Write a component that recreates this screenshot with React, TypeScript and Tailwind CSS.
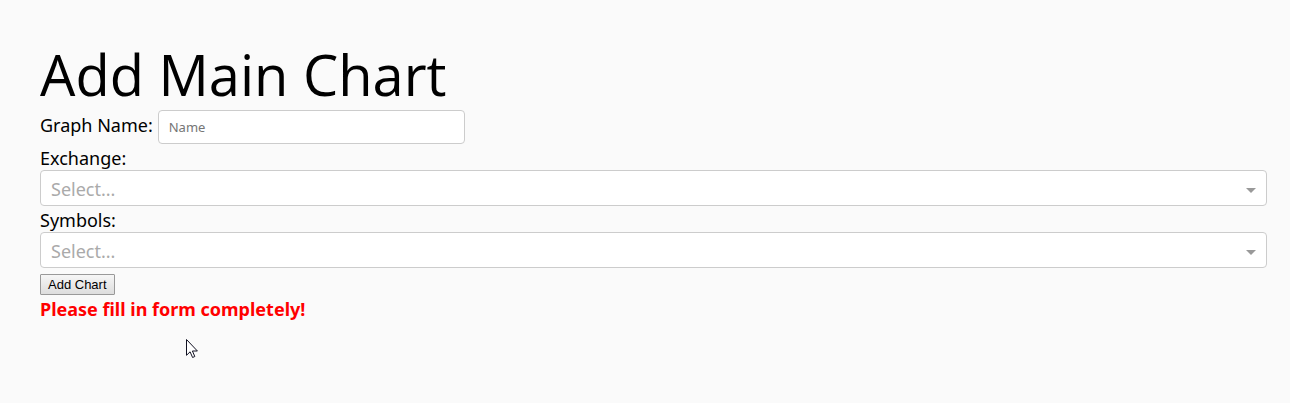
import React from "react";

function SelectField({ id, label }: { id: string; label: string }) {
  return (
    <div className="pt-0.5">
      <label htmlFor={id} className="block h-6 leading-6">{label}</label>
      <div className="relative">
        <select id={id} defaultValue="" className="block h-9 w-full appearance-none rounded border border-[#ccc] bg-white px-2.5 pt-0.5 text-[#aaa] outline-none">
          <option value="">Select...</option>
        </select>
        <svg aria-hidden="true" viewBox="0 0 10 5" className="pointer-events-none absolute top-[18px] right-[11px] h-[5px] w-2.5 fill-[#999]">
          <path d="M0 0h10L5 5z" />
        </svg>
      </div>
    </div>
  );
}

export default function App() {
  return (
    <main className="relative min-h-screen bg-[#fafafa] pt-9 pr-[23px] pb-10 pl-10 font-['Noto_Sans',sans-serif] text-lg text-black">
      <h1 className="h-[74px] font-['Open_Sans','Noto_Sans',sans-serif] text-[56px] leading-[76px] font-normal">Add Main Chart</h1>
      <form onSubmit={(e) => e.preventDefault()}>
        <div className="flex items-start gap-[5px]">
          <label htmlFor="graph-name" className="leading-[30px]">Graph Name:</label>
          <input id="graph-name" placeholder="Name" className="h-[34px] w-[307px] rounded border border-[#ccc] bg-white px-2.5 text-[13px] outline-none placeholder:text-[#757575]" />
        </div>
        <SelectField id="exchange" label="Exchange:" />
        <SelectField id="symbols" label="Symbols:" />
        <button className="mt-1.5 block h-[21px] rounded-[1px] border border-[#999] bg-linear-to-b from-[#f6f6f6] to-[#ddd] px-[7px] font-['Liberation_Sans',sans-serif] text-[13px] leading-[18px]">Add Chart</button>
        <p role="alert" className="leading-7 font-bold text-[#f00]">Please fill in form completely!</p>
      </form>
      <svg aria-hidden="true" viewBox="0 0 12 19" className="absolute top-[339px] left-[186px] h-[19px] w-3">
        <path d="M.5.5v15.8l3.6-3.5 2.5 5.7 2.2-1-2.4-5.5h5z" fill="#fff" stroke="#112" />
      </svg>
    </main>
  );
}
